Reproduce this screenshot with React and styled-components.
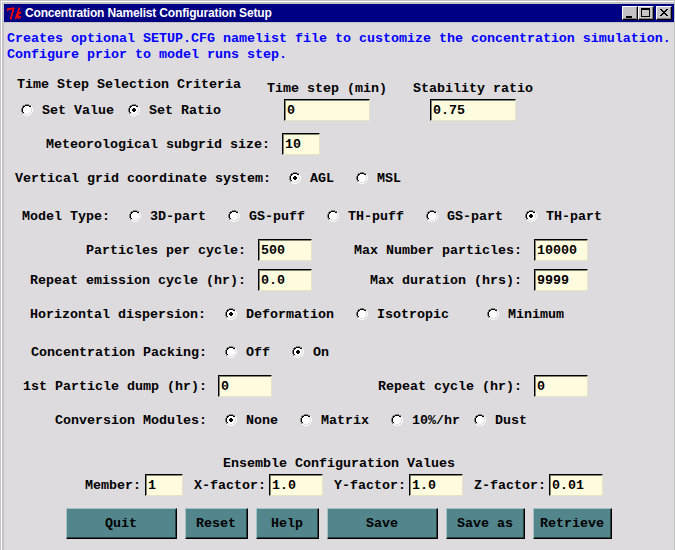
import React, { useState } from "react";
import styled, { createGlobalStyle } from "styled-components";

const Global = createGlobalStyle`
  * { box-sizing: border-box; }
  html, body { margin: 0; padding: 0; overflow: hidden; background: #dddbde; }
`;

const Window = styled.main`
  width: 675px;
  height: 550px;
  overflow: hidden;
  background: #dddbde;
  border-right: 1px solid #c0c0c0;
  border-left: 1px solid #c6c3c6;
  border-top: 1px solid #c6c3c6;
  font: bold 13.333px/16px "Liberation Mono", "Courier New", monospace;
  color: #000;
`;
const Frame = styled.div`
  height: 549px;
  border-left: 1px solid #fff;
  border-top: 1px solid #fff;
`;
const Inner = styled.div`
  height: 548px;
  border-left: 2px solid #c6c3c6;
  border-top: 2px solid #c6c3c6;
`;
const TitleBar = styled.header`
  display: flex;
  align-items: center;
  height: 18px;
  padding: 0 2px 0 3px;
  background: #000084;
  color: #fff;
`;
const Title = styled.h1`
  flex: 1;
  margin: 0 0 0 2px;
  font: bold 12px/18px "Liberation Sans", Arial, sans-serif;
  letter-spacing: -0.16px;
  white-space: pre;
`;
const Controls = styled.div`
  display: flex;
`;
const ControlButton = styled.button`
  width: 16px;
  height: 14px;
  padding: 0;
  margin-left: ${(p) => p.$gap || 0}px;
  background: #c6c3c6;
  border: 1px solid;
  border-color: #fff #000 #000 #fff;
  box-shadow: inset -1px -1px #848284;
  svg { display: block; }
`;
const Body = styled.div`
  border-top: 1px solid #c6c3c6;
`;
const Intro = styled.p`
  margin: 0;
  padding: 8px 0 0 3px;
  color: #0000ff;
  white-space: pre;
`;
const Row = styled.div`
  display: flex;
  align-items: center;
  height: ${(p) => p.$h || 22}px;
  margin-top: ${(p) => p.$top || 0}px;
  padding-left: ${(p) => p.$left}px;
  white-space: pre;
`;
const TimeStep = styled.section`
  display: flex;
  height: 46px;
  margin-top: 12px;
  padding-left: 13px;
  white-space: pre;
`;
const Criteria = styled.div`
  width: 250px;
  padding-top: 2px;
`;
const Options = styled.div`
  display: flex;
  height: 12px;
  align-items: center;
  margin: 11px 0 0 4px;
`;
const Field = styled.div`
  width: 146px;
  padding-top: 6px;
`;
const Label = styled.span`
  flex: none;
  width: ${(p) => p.$w}px;
  padding-top: 2px;
`;
const Entry = styled.input`
  display: block;
  flex: none;
  width: ${(p) => p.$w || 54}px;
  height: 22px;
  margin: ${(p) => p.$m || "0"};
  padding: 1px 0 0 2px;
  font: inherit;
  color: #000;
  background: #fffbde;
  border: 1px solid;
  border-color: #000 #e7e3c6 #e7e3c6 #000;
  box-shadow: inset 1px 1px #848273;
  border-radius: 0;
  outline: none;
`;
const Choice = styled.label`
  display: flex;
  flex: none;
  align-items: center;
  gap: 9px;
  width: ${(p) => p.$w}px;
  svg { flex: none; }
`;
const ButtonBar = styled.footer`
  display: flex;
  gap: 8px;
  margin-top: 12px;
  padding-left: 62px;
`;
const Button = styled.button`
  width: ${(p) => p.$w}px;
  height: 31px;
  padding: 1px 1px 0 0;
  font: inherit;
  color: #000;
  background: #52868c;
  border: 1px solid;
  border-color: #a5c3c6 #000 #000 #a5c3c6;
  box-shadow: inset -1px -1px #294345;
`;

const pixels = [
  "....GGGG....",
  "..GGBBBBGG..",
  ".GBBwwwwBBW.",
  ".GBwwwwwwLW.",
  "GBwwwwwwwwLW",
  "GBwwwwwwwwLW",
  "GBwwwwwwwwLW",
  "GBwwwwwwwwLW",
  ".GBwwwwwwLW.",
  ".GLLwwwwLLW.",
  "..WWLLLLWW..",
  "....WWWW....",
];
const tones = { G: "#848284", B: "#000", w: "#fff", W: "#fff", L: "#dedbde" };

function RadioIcon({ on }) {
  return (
    <svg width="12" height="12" shapeRendering="crispEdges">
      {pixels.flatMap((line, y) =>
        [...line].map((c, x) =>
          c === "." ? null : <rect key={x + "-" + y} x={x} y={y} width="1" height="1" fill={tones[c]} />
        )
      )}
      {on && <path d="M5 4h2v1h1v2h-1v1h-2v-1h-1v-2h1z" fill="#000" />}
    </svg>
  );
}

function Radios({ items, initial }) {
  const [value, setValue] = useState(initial);
  return items.map(([text, w]) => (
    <Choice key={text} $w={w} onClick={() => setValue(text)}>
      <RadioIcon on={value === text} />
      <Label>{text}</Label>
    </Choice>
  ));
}

export default function App() {
  return (
    <>
      <Global />
      <Window>
        <Frame>
          <Inner>
            <TitleBar>
              <svg width="16" height="16" fill="none" stroke="#f00" strokeWidth="1.7">
                <path d="M.5 6V4.3L7.5 3.2M6.5 3.5L3.5 14.5M12.5 2.5L8.5 14M9.5 10.5L14 7M10.5 9.5L11.5 13L14 11.5" />
              </svg>
              <Title>Concentration Namelist Configuration Setup</Title>
              <Controls>
                <ControlButton aria-label="Minimize">
                  <svg width="14" height="12"><path d="M3 9h6v2h-6z" /></svg>
                </ControlButton>
                <ControlButton aria-label="Maximize">
                  <svg width="14" height="12" shapeRendering="crispEdges"><path d="M2 1h9v9h-9zM3 3v6h7v-6z" fillRule="evenodd" /></svg>
                </ControlButton>
                <ControlButton aria-label="Close" $gap={2}>
                  <svg width="14" height="12" shapeRendering="crispEdges"><path d="M3 2h2v1h1v1h2v-1h1v-1h2v1h-1v1h-1v1h-1v1h1v1h1v1h1v1h-2v-1h-1v-1h-2v1h-1v1h-2v-1h1v-1h1v-1h1v-1h-1v-1h-1v-1h-1z" /></svg>
                </ControlButton>
              </Controls>
            </TitleBar>
            <Body>
              <Intro>{"Creates optional SETUP.CFG namelist file to customize the concentration simulation.\nConfigure prior to model runs step."}</Intro>
              <TimeStep>
                <Criteria>
                  Time Step Selection Criteria
                  <Options>
                    <Radios initial="Set Ratio" items={[["Set Value", 107], ["Set Ratio", 100]]} />
                  </Options>
                </Criteria>
                <Field>
                  Time step (min)
                  <Entry $w={86} $m="2px 0 0 17px" defaultValue="0" />
                </Field>
                <Field>
                  Stability ratio
                  <Entry $w={86} $m="2px 0 0 17px" defaultValue="0.75" />
                </Field>
              </TimeStep>
              <Row $left={42} $top={12}>
                <Label $w={236}>Meteorological subgrid size:</Label>
                <Entry $w={38} defaultValue="10" />
              </Row>
              <Row $left={11} $top={12}>
                <Label $w={274}>Vertical grid coordinate system:</Label>
                <Radios initial="AGL" items={[["AGL", 67], ["MSL", 60]]} />
              </Row>
              <Row $left={18} $top={16}>
                <Label $w={107}>Model Type:</Label>
                <Radios initial="TH-part" items={[["3D-part", 99], ["GS-puff", 99], ["TH-puff", 99], ["GS-part", 99], ["TH-part", 90]]} />
              </Row>
              <Row $left={82} $top={12}>
                <Label $w={172}>Particles per cycle:</Label>
                <Entry defaultValue="500" $m="0 42px 0 0" />
                <Label $w={180}>Max Number particles:</Label>
                <Entry defaultValue="10000" />
              </Row>
              <Row $left={26} $top={8}>
                <Label $w={228}>Repeat emission cycle (hr):</Label>
                <Entry defaultValue="0.0" $m="0 58px 0 0" />
                <Label $w={164}>Max duration (hrs):</Label>
                <Entry defaultValue="9999" />
              </Row>
              <Row $left={26} $top={12}>
                <Label $w={195}>Horizontal dispersion:</Label>
                <Radios initial="Deformation" items={[["Deformation", 131], ["Isotropic", 131], ["Minimum", 90]]} />
              </Row>
              <Row $left={27} $top={16}>
                <Label $w={194}>Concentration Packing:</Label>
                <Radios initial="On" items={[["Off", 67], ["On", 60]]} />
              </Row>
              <Row $left={19} $top={12}>
                <Label $w={195}>1st Particle dump (hr):</Label>
                <Entry defaultValue="0" $m="0 106px 0 0" />
                <Label $w={156}>Repeat cycle (hr):</Label>
                <Entry defaultValue="0" />
              </Row>
              <Row $left={51} $top={12}>
                <Label $w={170}>Conversion Modules:</Label>
                <Radios initial="None" items={[["None", 75], ["Matrix", 91], ["10%/hr", 83], ["Dust", 60]]} />
              </Row>
              <Row $left={219} $top={24} $h={16}>
                <Label>Ensemble Configuration Values</Label>
              </Row>
              <Row $left={81} $top={3}>
                <Label $w={60}>Member:</Label>
                <Entry $w={38} defaultValue="1" $m="0 11px 0 0" />
                <Label $w={75}>X-factor:</Label>
                <Entry defaultValue="1.0" $m="0 11px 0 0" />
                <Label $w={75}>Y-factor:</Label>
                <Entry defaultValue="1.0" $m="0 11px 0 0" />
                <Label $w={75}>Z-factor:</Label>
                <Entry defaultValue="0.01" />
              </Row>
              <ButtonBar>
                <Button $w={111}>Quit</Button>
                <Button $w={63}>Reset</Button>
                <Button $w={63}>Help</Button>
                <Button $w={111}>Save</Button>
                <Button $w={79}>Save as</Button>
                <Button $w={79}>Retrieve</Button>
              </ButtonBar>
            </Body>
          </Inner>
        </Frame>
      </Window>
    </>
  );
}
